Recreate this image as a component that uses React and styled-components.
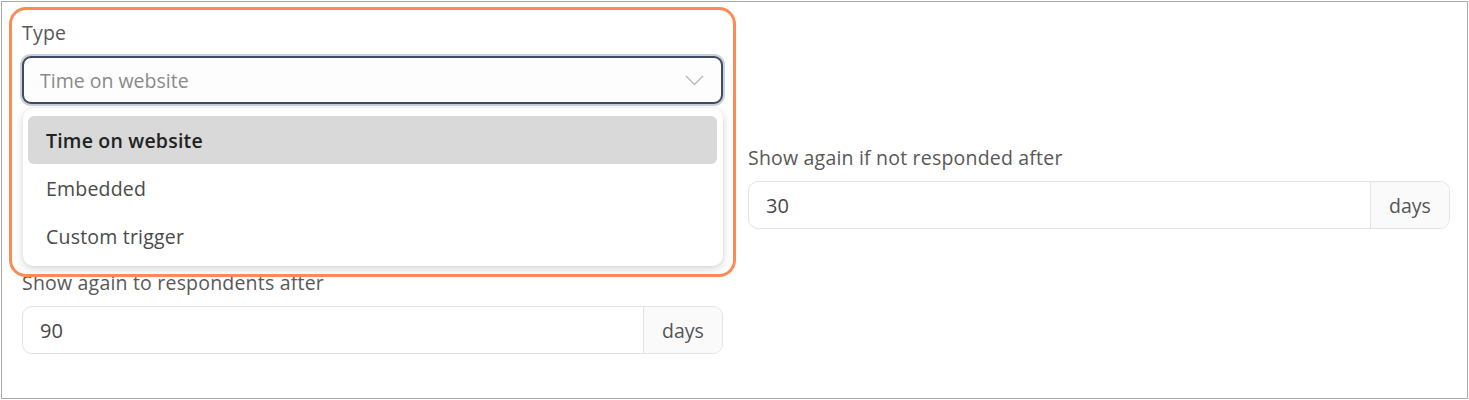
import React from 'react';
import styled, { createGlobalStyle } from 'styled-components';

const GlobalStyle = createGlobalStyle`
  body {
    margin: 0;
    background: #ffffff;
    font-family: "Open Sans", Lato, sans-serif;
  }
`;

const Frame = styled.div`
  position: relative;
  box-sizing: border-box;
  width: 1467px;
  height: 398px;
  margin: 1px 0 0 1px;
  border: 1px solid #a9a9a9;
  padding: 19px 0 0 20px;
  background: #fff;
`;

const Grid = styled.div`
  display: grid;
  grid-template-columns: 701px 702px;
  grid-template-rows: 83px 83px 83px;
  column-gap: 25px;
  row-gap: 42px;
`;

const Field = styled.div`
  display: flex;
  flex-direction: column;
  gap: 11px;
  position: relative;
  grid-column: ${(p) => p.col || 'auto'};
  grid-row: ${(p) => p.row || 'auto'};
`;

const Label = styled.label`
  font-size: 19.5px;
  line-height: 24px;
  color: #585858;
  letter-spacing: 0.2px;
`;

const SelectBox = styled.div`
  box-sizing: border-box;
  height: 48px;
  display: flex;
  align-items: center;
  justify-content: space-between;
  padding: 0 17px 0 16px;
  border: 2px solid #3f4b66;
  border-radius: 9px;
  box-shadow: 0 0 0 2px #cdd0d5;
  background: #fdfdfd;
  font-size: 19.5px;
  color: #8a8a8a;
`;

const Menu = styled.ul`
  position: absolute;
  top: calc(100% + 4px);
  left: 1px;
  right: 0;
  margin: 0;
  padding: 8px 6px 6px 5px;
  list-style: none;
  background: #fff;
  border-radius: 10px;
  box-shadow: 0 3px 10px rgba(0, 0, 0, 0.16), 0 0 2px rgba(0, 0, 0, 0.08);
  z-index: 2;
`;

const Option = styled.li`
  height: 48px;
  display: flex;
  align-items: center;
  padding-left: 18px;
  border-radius: 6px;
  font-size: 19.5px;
  letter-spacing: 0.2px;
  background: ${(p) => (p.active ? '#d9d9d9' : 'transparent')};
  color: ${(p) => (p.active ? '#222' : '#4a4a4a')};
  font-weight: ${(p) => (p.active ? 600 : 400)};
`;

const InputGroup = styled.div`
  box-sizing: border-box;
  height: 48px;
  display: flex;
  border: 1px solid #e3e3e3;
  border-radius: 10px;
  overflow: hidden;
  background: #fff;
`;

const Value = styled.div`
  flex: 1;
  display: flex;
  align-items: center;
  padding-left: 17px;
  font-size: 20px;
  color: #474747;
`;

const Addon = styled.div`
  width: 78px;
  display: flex;
  align-items: center;
  justify-content: center;
  border-left: 1px solid #e3e3e3;
  background: #fafafa;
  font-size: 19.5px;
  color: #555;
`;

const Highlight = styled.div`
  position: absolute;
  left: 7px;
  top: 5px;
  width: 727px;
  height: 270px;
  box-sizing: border-box;
  border: 3.5px solid #ff8a55;
  border-radius: 17px;
  pointer-events: none;
  z-index: 3;
`;

const Chevron = () => (
  <svg width="19" height="11" viewBox="0 0 19 11" fill="none">
    <path d="M1 1l8.5 8.5L18 1" stroke="#b8b8b8" strokeWidth="1.4" />
  </svg>
);

const options = ['Time on website', 'Embedded', 'Custom trigger'];

function NumberField({ label, value, unit, col, row }) {
  return (
    <Field col={col} row={row}>
      <Label>{label}</Label>
      <InputGroup>
        <Value>{value}</Value>
        <Addon>{unit}</Addon>
      </InputGroup>
    </Field>
  );
}

export default function App() {
  return (
    <>
      <GlobalStyle />
      <Frame>
        <Grid>
          <Field col="1" row="1">
            <Label>Type</Label>
            <div style={{ position: 'relative' }}>
              <SelectBox>
                <span>Time on website</span>
                <Chevron />
              </SelectBox>
              <Menu>
                {options.map((o, i) => (
                  <Option key={o} active={i === 0}>{o}</Option>
                ))}
              </Menu>
            </div>
          </Field>
          <NumberField col="2" row="2" label="Show again if not responded after" value="30" unit="days" />
          <NumberField col="1" row="3" label="Show again to respondents after" value="90" unit="days" />
        </Grid>
        <Highlight />
      </Frame>
    </>
  );
}
